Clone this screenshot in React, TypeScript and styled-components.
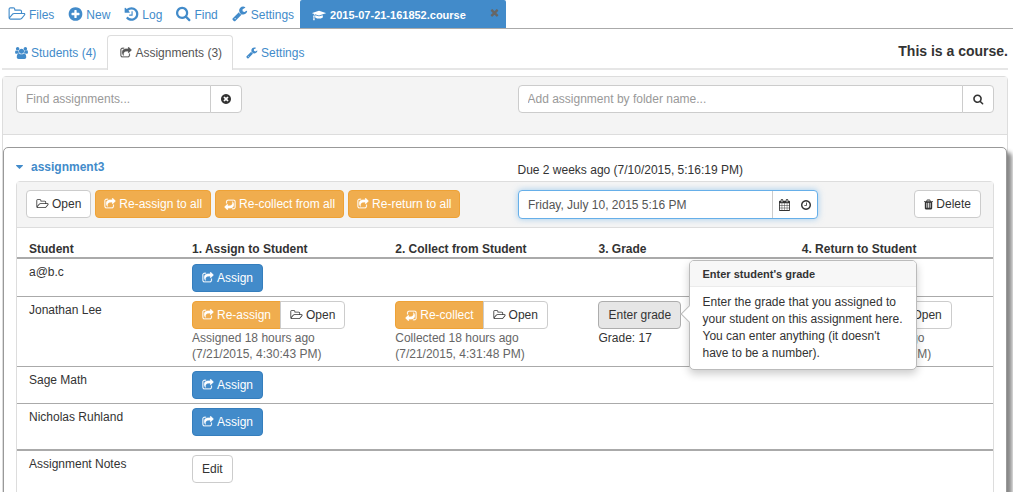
import React from "react";
import styled, { createGlobalStyle, css } from "styled-components";

const GlobalStyle = createGlobalStyle`
  *, *::before, *::after { box-sizing: border-box; }
  body {
    margin: 0;
    background: #fff;
    color: #333;
    font: 12px/16px "Helvetica Neue", "Liberation Sans", Arial, sans-serif;
  }
  button, input { font: inherit; color: inherit; }
  button { cursor: pointer; }
  a { color: #428bca; text-decoration: none; }
`;

const glyphs = {
  folder: ["0 0 2048 1792", "M1845 931q0-35-53-35h-1088q-40 0-85.5 21.5t-71.5 52.5l-294 363q-18 24-18 40 0 35 53 35h1088q40 0 86-22t71-53l294-363q18-22 18-39zm-1141-163h768v-160q0-40-28-68t-68-28h-576q-40 0-68-28t-28-68v-64q0-40-28-68t-68-28h-320q-40 0-68 28t-28 68v853l256-315q44-53 116-87.5t140-34.5zm1269 163q0 62-46 120l-295 363q-43 53-116 87.5t-140 34.5h-1088q-92 0-158-66t-66-158v-960q0-92 66-158t158-66h320q92 0 158 66t66 158v32h544q92 0 158 66t66 158v160h192q54 0 99 24.5t67 70.5q15 32 15 68z"],
  plus: ["64 0 1664 1792", "M1344 960v-128q0-26-19-45t-45-19h-256v-256q0-26-19-45t-45-19h-128q-26 0-45 19t-19 45v256h-256q-26 0-45 19t-19 45v128q0 26 19 45t45 19h256v256q0 26 19 45t45 19h128q26 0 45-19t19-45v-256h256q26 0 45-19t19-45zm320-64q0 209-103 385.5t-279.5 279.5-385.5 103-385.5-103-279.5-279.5-103-385.5 103-385.5 279.5-279.5 385.5-103 385.5 103 279.5 279.5 103 385.5z"],
  history: ["64 0 1664 1792", "M1664 896q0 156-61 298t-164 245-245 164-298 61q-172 0-327-72.5t-264-204.5q-7-10-6.5-22.5t8.5-20.5l137-138q10-9 25-9 16 2 23 12 73 95 179 147t225 52q104 0 198.5-40.5t163.5-109.5 109.5-163.5 40.5-198.5-40.5-198.5-109.5-163.5-163.5-109.5-198.5-40.5q-98 0-188 35.5t-160 101.5l137 138q31 30 14 69-17 40-59 40h-448q-26 0-45-19t-19-45v-448q0-42 40-59 39-17 69 14l130 129q107-101 244.5-156.5t284.5-55.5q156 0 298 61t245 164 164 245 61 298zm-640-288v448q0 14-9 23t-23 9h-320q-14 0-23-9t-9-23v-64q0-14 9-23t23-9h224v-352q0-14 9-23t23-9h64q14 0 23 9t9 23z"],
  search: ["64 64 1728 1792", "M1216 832q0-185-131.5-316.5t-316.5-131.5-316.5 131.5-131.5 316.5 131.5 316.5 316.5 131.5 316.5-131.5 131.5-316.5zm512 832q0 52-38 90t-90 38q-54 0-90-38l-343-342q-179 124-399 124-143 0-273.5-55.5t-225-150-150-225-55.5-273.5 55.5-273.5 150-225 225-150 273.5-55.5 273.5 55.5 225 150 150 225 55.5 273.5q0 220-124 399l343 343q37 37 37 90z"],
  wrench: ["64 64 1728 1792", "M448 1472q0-26-19-45t-45-19-45 19-19 45 19 45 45 19 45-19 19-45zm644-420l-682 682q-37 37-90 37-52 0-91-37l-106-108q-38-36-38-90 0-53 38-91l681-681q39 98 114.5 173.5t173.5 114.5zm634-435q0 39-23 106-47 134-164.5 217.5t-258.5 83.5q-185 0-316.5-131.5t-131.5-316.5 131.5-316.5 316.5-131.5q58 0 121.5 16.5t107.5 46.5q16 11 16 28t-16 28l-293 169v224l193 107q5-3 79-48.5t135.5-81 70.5-35.5q15 0 23.5 10t8.5 25z"],
  cap: ["0 0 2304 1792", "M1774 836l18 316q4 69-82 128t-235 93.5-323 34.5-323-34.5-235-93.5-82-128l18-316 574 181q22 7 48 7t48-7zm530-324q0 23-22 31l-1120 352q-4 1-10 1t-10-1l-652-206q-43 34-71 111.5t-34 178.5q63 36 63 109 0 69-58 107l58 433q2 14-8 25-9 11-24 11h-192q-15 0-24-11-10-11-8-25l58-433q-58-38-58-107 0-73 65-111 11-207 98-330l-333-104q-22-8-22-31t22-31l1120-352q4-1 10-1t10 1l1120 352q22 8 22 31z"],
  times: ["192 192 1408 1408", "M1490 1322q0 40-28 68l-136 136q-28 28-68 28t-68-28l-294-294-294 294q-28 28-68 28t-68-28l-136-136q-28-28-28-68t28-68l294-294-294-294q-28-28-28-68t28-68l136-136q28-28 68-28t68 28l294 294 294-294q28-28 68-28t68 28l136 136q28 28 28 68t-28 68l-294 294 294 294q28 28 28 68z"],
  users: ["-64 0 1920 1792", "M529 896q-162 5-265 128h-134q-82 0-138-40.5t-56-118.5q0-353 124-353 6 0 43.5 21t97.5 42.5 119 21.5q67 0 133-23-5 37-5 66 0 159 90 293zm1071 637q0 120-73 189.5t-194 69.5h-874q-121 0-194-69.5t-73-189.5q0-53 3.5-103.5t14-109 26.5-108.5 43-97.5 62-81 85.5-53.5 111.5-20q10 0 43 21.5t73 48 107 48 135 21.5 135-21.5 107-48 73-48 43-21.5q61 0 111.5 20t85.5 53.5 62 81 43 97.5 26.5 108.5 14 109 3.5 103.5zm-1024-1277q0 106-75 181t-181 75-181-75-75-181 75-181 181-75 181 75 75 181zm704 384q0 159-112.5 271.5t-271.5 112.5-271.5-112.5-112.5-271.5 112.5-271.5 271.5-112.5 271.5 112.5 112.5 271.5zm576 225q0 78-56 118.5t-138 40.5h-134q-103-123-265-128 90-134 90-293 0-29-5-66 66 23 133 23 59 0 119-21.5t97.5-42.5 43.5-21q124 0 124 353zm-128-609q0 106-75 181t-181 75-181-75-75-181 75-181 181-75 181 75 75 181z"],
  share: ["0 0 1792 1792", "M1472 989v259q0 119-84.5 203.5t-203.5 84.5h-832q-119 0-203.5-84.5t-84.5-203.5v-832q0-119 84.5-203.5t203.5-84.5h255q13 0 22.5 9.5t9.5 22.5q0 27-26 32-77 26-133 60-10 4-16 4h-112q-66 0-113 47t-47 113v832q0 66 47 113t113 47h832q66 0 113-47t47-113v-214q0-19 18-29 28-13 54-37 16-16 35-8 21 9 21 29zm237-496l-384 384q-18 19-45 19-12 0-25-5-39-17-39-59v-192h-160q-323 0-438 131-119 137-74 473 3 23-20 34-8 2-12 2-16 0-26-13-10-14-21-31t-39.5-68.5-49.5-99.5-38.5-114-17.5-122q0-49 3.5-91t14-90 28-88 47-81.5 68.5-74 94.5-61.5 124.5-48.5 159.5-30.5 196.5-11h160v-192q0-42 39-59 13-5 25-5 26 0 45 19l384 384q19 19 19 45t-19 45z"],
  clear: ["128 128 1536 1536", "M1277 1122q0-26-19-45l-181-181 181-181q19-19 19-45 0-27-19-46l-90-90q-19-19-46-19-26 0-45 19l-181 181-181-181q-19-19-45-19-27 0-46 19l-90 90q-19 19-19 46 0 26 19 45l181 181-181 181q-19 19-19 45 0 27 19 46l90 90q19 19 46 19 26 0 45-19l181-181 181 181q19 19 45 19 27 0 46-19l90-90q19-19 19-46zm387-226q0 209-103 385.5t-279.5 279.5-385.5 103-385.5-103-279.5-279.5-103-385.5 103-385.5 279.5-279.5 385.5-103 385.5 103 279.5 279.5 103 385.5z"],
  clock: ["128 128 1536 1536", "M1024 544v448q0 14-9 23t-23 9h-320q-14 0-23-9t-9-23v-64q0-14 9-23t23-9h224v-352q0-14 9-23t23-9h64q14 0 23 9t9 23zm416 352q0-148-73-273t-198-198-273-73-273 73-198 198-73 273 73 273 198 198 273 73 273-73 198-198 73-273zm224 0q0 209-103 385.5t-279.5 279.5-385.5 103-385.5-103-279.5-279.5-103-385.5 103-385.5 279.5-279.5 385.5-103 385.5 103 279.5 279.5 103 385.5z"],
  calendar: ["64 0 1664 1792", "M192 1664h288v-288h-288v288zm352 0h320v-288h-320v288zm-352-352h288v-320h-288v320zm352 0h320v-320h-320v320zm-352-384h288v-288h-288v288zm736 736h320v-288h-320v288zm-384-736h320v-288h-320v288zm768 736h288v-288h-288v288zm-384-352h320v-320h-320v320zm-352-864v-288q0-13-9.5-22.5t-22.5-9.5h-64q-13 0-22.5 9.5t-9.5 22.5v288q0 13 9.5 22.5t22.5 9.5h64q13 0 22.5-9.5t9.5-22.5zm736 864h288v-320h-288v320zm-384-384h320v-288h-320v288zm384 0h288v-288h-288v288zm32-480v-288q0-13-9.5-22.5t-22.5-9.5h-64q-13 0-22.5 9.5t-9.5 22.5v288q0 13 9.5 22.5t22.5 9.5h64q13 0 22.5-9.5t9.5-22.5zm384-64v1280q0 52-38 90t-90 38h-1408q-52 0-90-38t-38-90v-1280q0-52 38-90t90-38h128v-96q0-66 47-113t113-47h64q66 0 113 47t47 113v96h384v-96q0-66 47-113t113-47h64q66 0 113 47t47 113v96h128q52 0 90 38t38 90z"],
  trash: ["192 64 1408 1664", "M704 1376v-704q0-14-9-23t-23-9h-64q-14 0-23 9t-9 23v704q0 14 9 23t23 9h64q14 0 23-9t9-23zm256 0v-704q0-14-9-23t-23-9h-64q-14 0-23 9t-9 23v704q0 14 9 23t23 9h64q14 0 23-9t9-23zm256 0v-704q0-14-9-23t-23-9h-64q-14 0-23 9t-9 23v704q0 14 9 23t23 9h64q14 0 23-9t9-23zm-544-992h448l-48-117q-7-9-17-11h-317q-10 2-17 11zm928 32v64q0 14-9 23t-23 9h-96v948q0 83-47 143.5t-113 60.5h-832q-66 0-113-58.5t-47-141.5v-952h-96q-14 0-23-9t-9-23v-64q0-14 9-23t23-9h309l70-167q15-37 54-63t79-26h320q40 0 79 26t54 63l70 167h309q14 0 23 9t9 23z"],
  caret: ["384 640 1024 576", "M1408 704q0 26-19 45l-448 448q-19 19-45 19t-45-19l-448-448q-19-19-19-45t19-45 45-19h896q26 0 45 19t19 45z"],
} as const;

type GlyphName = keyof typeof glyphs;

const Glyph = styled.svg<{ $w: number; $h: number; $turned?: boolean; $heavy?: boolean }>`
  display: block;
  flex: none;
  width: ${(p) => p.$w}px;
  height: ${(p) => p.$h}px;
  fill: currentColor;
  ${(p) => p.$turned && "transform: rotate(180deg);"}
  ${(p) => p.$heavy && "stroke: currentColor; stroke-width: 30;"}
`;

function Icon({ name, w = 12, h = 12, turned }: { name: GlyphName; w?: number; h?: number; turned?: boolean }) {
  const [box, d] = glyphs[name];
  return (
    <Glyph viewBox={box} $w={w} $h={h} $turned={turned} $heavy={name === "share"} aria-hidden="true">
      <path d={d} />
    </Glyph>
  );
}

const Page = styled.div`
  display: flex;
  flex-direction: column;
  height: 100vh;
  overflow: hidden;
`;

const TopBar = styled.nav`
  display: flex;
  flex: none;
  height: 29px;
  border-bottom: 1px solid #aaa;
`;

const TopLinks = styled.div`
  display: flex;
  align-items: center;
  gap: 14px;
  padding: 0 6px 0 8px;
`;

const TopLink = styled.a`
  display: flex;
  align-items: center;
  gap: 3px;
  line-height: 28px;

  span { padding-top: 2px; }
`;

const FileTab = styled.div`
  display: flex;
  align-items: center;
  gap: 4px;
  width: 206px;
  padding: 2px 7px 0 12px;
  border-radius: 2px 2px 0 0;
  background: #428bca;
  color: #fff;
  font-size: 11px;
  font-weight: bold;
`;

const CloseButton = styled.button`
  align-self: flex-start;
  margin-left: auto;
  padding: 6px 0 0;
  border: 0;
  background: none;
  color: #666;
`;

const Content = styled.main`
  display: flex;
  flex-direction: column;
  flex: 1;
  min-height: 0;
  padding: 6px 5px 0 2px;
`;

const CourseBar = styled.header`
  display: flex;
  flex: none;
  height: 35px;
  border-bottom: 2px solid #e6e6e6;
`;

const CourseTab = styled.a<{ $active?: boolean }>`
  display: flex;
  align-items: center;
  gap: 3px;
  height: 35px;
  padding: 0 10px 0 12px;
  border: 1px solid transparent;
  border-bottom: 0;
  border-radius: 4px 4px 0 0;
  ${(p) =>
    p.$active &&
    css`
      border-color: #ddd;
      background: #fff;
      color: #555;
    `}
`;

const CourseTitle = styled.h1`
  margin: 0 0 0 auto;
  font-size: 14px;
  line-height: 33px;
`;

const Panel = styled.section`
  margin-top: 6px;
  border: 1px solid #ddd;
  border-radius: 4px;
`;

const PanelHead = styled.div`
  display: grid;
  grid-template-columns: repeat(12, minmax(0, 1fr));
  column-gap: 25px;
  height: 58px;
  padding: 8px 13px 0;
  border-bottom: 1px solid #ddd;
  background: #f4f4f4;
`;

const InputGroup = styled.form<{ $from: number; $span: number }>`
  grid-column: ${(p) => p.$from} / span ${(p) => p.$span};
  display: flex;
  height: 28px;
`;

const TextInput = styled.input`
  flex: 1;
  min-width: 0;
  padding: 0 9px;
  border: 1px solid #ccc;
  border-radius: 4px 0 0 4px;
  background: #fff;
  outline: 0;

  &::placeholder { color: #999; opacity: 1; }
`;

const AddonButton = styled.button`
  display: flex;
  align-items: center;
  justify-content: center;
  width: 32px;
  margin-left: -1px;
  padding: 0;
  border: 1px solid #ccc;
  border-radius: 0 4px 4px 0;
  background: #fff;
`;

const Card = styled.article`
  margin: 12px 0 0;
  padding: 10px 12px 24px;
  border: 1px solid #999;
  border-radius: 5px;
  background: #fff;
  box-shadow: 5px 5px 4px #888;
`;

const CardHead = styled.div`
  display: grid;
  grid-template-columns: 1fr 1fr;
  column-gap: 25px;
  height: 23px;
`;

const NameLink = styled.a`
  display: flex;
  align-items: center;
  gap: 8px;
  height: 18px;
  font-weight: bold;
`;

const DueText = styled.div`
  padding-top: 4px;
`;

const Inner = styled.div`
  border: 1px solid #ddd;
  border-radius: 4px;
`;

const Toolbar = styled.div`
  display: grid;
  grid-template-columns: repeat(2, minmax(0, 1fr));
  column-gap: 29px;
  height: 46px;
  padding: 8px 12px 0 9px;
  border-bottom: 1px solid #ddd;
  background: #f4f4f4;
`;

const ToolEnd = styled.div`
  display: flex;
  align-items: flex-start;
  justify-content: space-between;
`;

const tones = {
  plain: ["#fff", "#ccc", "#333"],
  pressed: ["#e6e6e6", "#adadad", "#333"],
  primary: ["#428bca", "#357ebd", "#fff"],
  warning: ["#f0ad4e", "#eea236", "#fff"],
} as const;

const Button = styled.button<{ $tone?: keyof typeof tones }>`
  display: inline-flex;
  flex: none;
  align-items: center;
  gap: 3px;
  height: 28px;
  padding: 0 9px;
  border: 1px solid ${(p) => tones[p.$tone ?? "plain"][1]};
  border-radius: 4px;
  background: ${(p) => tones[p.$tone ?? "plain"][0]};
  color: ${(p) => tones[p.$tone ?? "plain"][2]};
  line-height: 16px;
  white-space: nowrap;
  vertical-align: top;
`;

const ToolGroup = styled.div`
  display: flex;
  align-items: flex-start;
  gap: 4px;

  ${Button} + ${Button} { padding: 0 8px; }
`;

const ButtonGroup = styled.div`
  display: flex;

  ${Button}:first-child { border-radius: 4px 0 0 4px; }
  ${Button}:last-child { margin-left: -1px; border-radius: 0 4px 4px 0; }
`;

const DateBox = styled.div`
  display: flex;
  width: 300px;
  height: 29px;
  border: 1px solid #66afe9;
  border-radius: 4px;
  background: #fff;
  box-shadow: 0 0 6px rgba(102, 175, 233, 0.6);
`;

const DateInput = styled.input`
  flex: 1;
  min-width: 0;
  padding: 0 9px;
  border: 0;
  border-right: 1px solid #ccc;
  background: none;
  color: #555;
  outline: 0;
`;

const DateButton = styled.button`
  display: flex;
  align-items: center;
  justify-content: center;
  width: 22px;
  padding: 0;
  border: 0;
  background: none;
`;

const Students = styled.table`
  width: 100%;
  table-layout: fixed;
  border-collapse: separate;
  border-spacing: 0;

  col:first-child { width: 16.7%; }

  th, td {
    padding: 4px 0 4px 12px;
    text-align: left;
    vertical-align: top;
    font-weight: normal;
    white-space: nowrap;
  }
  thead th {
    padding: 13px 0 0 12px;
    border-bottom: 2px solid #aaa;
    font-weight: bold;
  }
  tbody th, tfoot th { padding-top: 5px; }
  tbody tr:first-child td { padding-top: 5px; }
  tbody tr + tr > * { border-top: 1px solid #aaa; }
  tbody tr:last-child > * { padding-bottom: 13px; }
  tfoot > tr > * { padding-bottom: 16px; border-top: 2px solid #aaa; }
`;

const Stamp = styled.div<{ $dark?: boolean }>`
  padding-top: 1px;
  color: ${(p) => (p.$dark ? "#333" : "#666")};
`;

const GradeCell = styled.div`
  position: relative;
`;

const Popover = styled.div`
  position: absolute;
  top: -41px;
  left: 91px;
  z-index: 1;
  width: 228px;
  height: 110px;
  border: 1px solid #bbb;
  border-radius: 5px;
  background: #fff;
  box-shadow: 0 4px 8px rgba(0, 0, 0, 0.2);
  white-space: normal;

  &::before {
    content: "";
    position: absolute;
    top: 47px;
    left: -7px;
    width: 12px;
    height: 12px;
    border: solid #bbb;
    border-width: 0 0 1px 1px;
    background: #fff;
    transform: rotate(45deg);
  }
`;

const PopoverTitle = styled.h2`
  margin: 0;
  padding: 5px 12px 4px;
  border-bottom: 1px solid #ebebeb;
  border-radius: 4px 4px 0 0;
  background: #f7f7f7;
  font-size: 11px;
  line-height: 16px;
`;

const PopoverText = styled.p`
  margin: 0;
  padding: 7px 10px 0 12px;
  line-height: 17px;
`;

type Step = { done: string; verb?: string; at?: string; turned?: boolean };

function DoneStep({ done, verb, at, turned }: Step) {
  return (
    <>
      <ButtonGroup>
        <Button $tone="warning"><Icon name="share" turned={turned} />{done}</Button>
        <Button><Icon name="folder" w={13} />Open</Button>
      </ButtonGroup>
      <Stamp>{verb} 18 hours ago<br />({at})</Stamp>
    </>
  );
}

function PendingRow({ name }: { name: string }) {
  return (
    <tr>
      <th scope="row">{name}</th>
      <td><Button $tone="primary"><Icon name="share" />Assign</Button></td>
      <td /><td /><td />
    </tr>
  );
}

export default function App() {
  return (
    <>
      <GlobalStyle />
      <Page>
        <TopBar>
          <TopLinks>
            <TopLink href="#files"><Icon name="folder" w={18} h={16} /><span>Files</span></TopLink>
            <TopLink href="#new"><Icon name="plus" w={15} h={16} /><span>New</span></TopLink>
            <TopLink href="#log"><Icon name="history" w={15} h={16} /><span>Log</span></TopLink>
            <TopLink href="#find"><Icon name="search" w={15} h={16} /><span>Find</span></TopLink>
            <TopLink href="#settings"><Icon name="wrench" w={16} h={16} /><span>Settings</span></TopLink>
          </TopLinks>
          <FileTab>
            <Icon name="cap" w={14} h={11} />
            2015-07-21-161852.course
            <CloseButton aria-label="Close file"><Icon name="times" w={9} h={9} /></CloseButton>
          </FileTab>
        </TopBar>
        <Content>
          <CourseBar>
            <CourseTab href="#students"><Icon name="users" w={13} h={12} />Students (4)</CourseTab>
            <CourseTab href="#assignments" $active><Icon name="share" />Assignments (3)</CourseTab>
            <CourseTab href="#course-settings"><Icon name="wrench" />Settings</CourseTab>
            <CourseTitle>This is a course.</CourseTitle>
          </CourseBar>
          <Panel>
            <PanelHead>
              <InputGroup $from={1} $span={3}>
                <TextInput aria-label="Find assignments" placeholder="Find assignments..." />
                <AddonButton type="button" aria-label="Clear"><Icon name="clear" w={10} h={10} /></AddonButton>
              </InputGroup>
              <InputGroup $from={7} $span={6}>
                <TextInput aria-label="Add assignment by folder name" placeholder="Add assignment by folder name..." />
                <AddonButton type="button" aria-label="Search"><Icon name="search" w={11} h={11} /></AddonButton>
              </InputGroup>
            </PanelHead>
            <Card>
              <CardHead>
                <NameLink href="#assignment3"><Icon name="caret" w={7} h={4} />assignment3</NameLink>
                <DueText>Due 2 weeks ago (7/10/2015, 5:16:19 PM)</DueText>
              </CardHead>
              <Inner>
                <Toolbar>
                  <ToolGroup>
                    <Button><Icon name="folder" w={13} />Open</Button>
                    <Button $tone="warning"><Icon name="share" />Re-assign to all</Button>
                    <Button $tone="warning"><Icon name="share" turned />Re-collect from all</Button>
                    <Button $tone="warning"><Icon name="share" />Re-return to all</Button>
                  </ToolGroup>
                  <ToolEnd>
                    <DateBox>
                      <DateInput aria-label="Due date" defaultValue="Friday, July 10, 2015 5:16 PM" />
                      <DateButton aria-label="Pick date"><Icon name="calendar" w={11} h={12} /></DateButton>
                      <DateButton aria-label="Pick time"><Icon name="clock" w={10} h={10} /></DateButton>
                    </DateBox>
                    <Button><Icon name="trash" w={9} h={11} />Delete</Button>
                  </ToolEnd>
                </Toolbar>
                <Students>
                  <colgroup><col /><col /><col /><col /><col /></colgroup>
                  <thead>
                    <tr>
                      <th scope="col">Student</th>
                      <th scope="col">1. Assign to Student</th>
                      <th scope="col">2. Collect from Student</th>
                      <th scope="col">3. Grade</th>
                      <th scope="col">4. Return to Student</th>
                    </tr>
                  </thead>
                  <tbody>
                    <PendingRow name="a@b.c" />
                    <tr>
                      <th scope="row">Jonathan Lee</th>
                      <td><DoneStep done="Re-assign" verb="Assigned" at="7/21/2015, 4:30:43 PM" /></td>
                      <td><DoneStep done="Re-collect" verb="Collected" at="7/21/2015, 4:31:48 PM" turned /></td>
                      <td>
                        <GradeCell>
                          <Button $tone="pressed">Enter grade</Button>
                          <Stamp $dark>Grade: 17</Stamp>
                          <Popover role="tooltip">
                            <PopoverTitle>Enter student's grade</PopoverTitle>
                            <PopoverText>
                              Enter the grade that you assigned to your student on this assignment here. You can
                              enter anything (it doesn't have to be a number).
                            </PopoverText>
                          </Popover>
                        </GradeCell>
                      </td>
                      <td><DoneStep done="Re-return" verb="Returned" at="7/21/2015, 4:32:10 PM" /></td>
                    </tr>
                    <PendingRow name="Sage Math" />
                    <PendingRow name="Nicholas Ruhland" />
                  </tbody>
                  <tfoot>
                    <tr>
                      <th scope="row">Assignment Notes</th>
                      <td colSpan={4}><Button>Edit</Button></td>
                    </tr>
                  </tfoot>
                </Students>
              </Inner>
            </Card>
          </Panel>
        </Content>
      </Page>
    </>
  );
}
